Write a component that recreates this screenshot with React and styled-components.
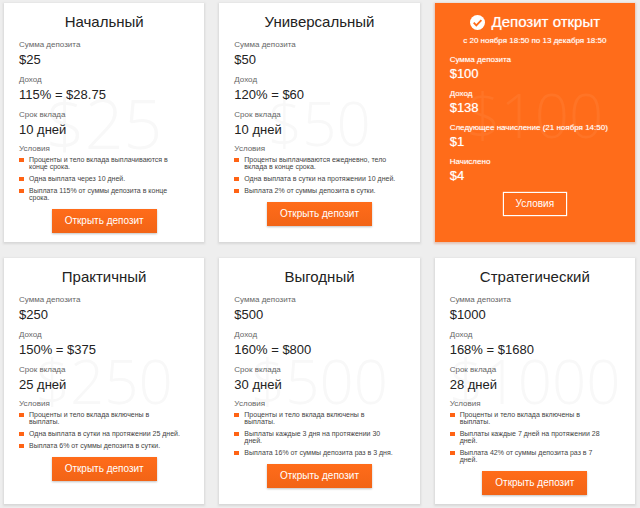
import React from "react";
import styled, { createGlobalStyle } from "styled-components";

const GlobalStyle = createGlobalStyle`
    body {
        margin: 0;
        background-color: #eeeeee;
        font-family: "Liberation Sans", Arial, sans-serif;
    }
`

const Grid = styled.main`
    display: grid;
    grid-template-columns: repeat(3, 1fr);
    gap: 16px 15px;
    padding: 3px 5px 4px 4px;
`

const Card = styled.section`
    position: relative;
    display: flex;
    flex-direction: column;
    box-sizing: border-box;
    padding: 9px 15px;
    color: ${({ $active }) => ($active ? "#ffffff" : "#222222")};
    background-color: ${({ $active }) => ($active ? "#ff6c1a" : "#ffffff")};
    box-shadow: 0 1px 2px 1px ${({ $active }) => ($active ? "#e3c4b6" : "#d8d8d8")};
    text-shadow: ${({ $active }) => ($active ? "0 0 1px #ffffff99" : "none")};
`

const Watermark = styled.div`
    position: absolute;
    inset: 0;
    display: flex;
    align-items: center;
    justify-content: center;
    padding-bottom: ${({ $active }) => ($active ? "16px" : "0")};
    font-family: "Open Sans", sans-serif;
    font-weight: 300;
    font-size: ${({ $large }) => ($large ? "68px" : "60px")};
    line-height: 1;
    color: ${({ $active }) => ($active ? "#ff7426" : "#f8f8f8")};
    text-shadow: none;
    pointer-events: none;
`

const Content = styled.div`
    position: relative;
    display: flex;
    flex-direction: column;
`

const Title = styled.h2`
    display: flex;
    align-items: center;
    justify-content: center;
    gap: 7px;
    margin: 0;
    font-size: 15px;
    font-weight: 400;
    line-height: 20px;
    white-space: nowrap;
`

const Period = styled.p`
    margin: 3px 0 0;
    font-size: 8px;
    line-height: 12px;
    text-align: center;
`

const Facts = styled.dl`
    margin: 7px 0 0;
`

const Label = styled.dt`
    font-size: 8px;
    line-height: 12px;
    color: ${({ $active }) => ($active ? "#ffffff" : "#666666")};
`

const Value = styled.dd`
    margin: 0 0 6px;
    font-size: 13px;
    line-height: ${({ $active }) => ($active ? "16px" : "17px")};
`

const Subtitle = styled.h3`
    margin: 0;
    font-size: 8px;
    font-weight: 400;
    line-height: 10px;
    color: #666666;
`

const Terms = styled.ul`
    display: flex;
    flex-direction: column;
    gap: 5px;
    margin: 2px 0 8px;
    padding: 0;
    list-style: none;
`

const Term = styled.li`
    display: flex;
    gap: 5px;
    font-size: 7px;
    line-height: 7px;
    white-space: pre-line;
    color: #444444;
    &::before {
        content: "";
        flex: none;
        width: 5px;
        height: 4px;
        margin-top: 2px;
        background-color: #ff6314;
    }
`

const Button = styled.button`
    align-self: center;
    box-sizing: border-box;
    height: 24px;
    padding: 0 13px;
    border: none;
    font-family: inherit;
    font-size: 10px;
    line-height: 22px;
    color: #ffffff;
    background: linear-gradient(#ff6c1a, #f26416);
    box-shadow: 0 1px 2px #00000040;
    cursor: pointer;
`

const OutlineButton = styled(Button)`
    margin-top: 2px;
    padding: 0 12px;
    border: 1px solid #ffffff;
    background: none;
    box-shadow: 0 0 1px #ffffff;
`

const CheckIcon = () => (
    <svg width="15" height="15" viewBox="0 0 15 15" aria-hidden="true">
        <circle cx="7.5" cy="7.5" r="7.5" fill="#ffffff" />
        <path d="M3.7 7.7 6.3 10.3 11.4 5.2" fill="none" stroke="#ff6c1a" strokeWidth="1.9" />
    </svg>
)

const rows = (amount, income, term) => [
    ["Сумма депозита", amount],
    ["Доход", income],
    ["Срок вклада", term],
]

const starter = {
    name: "Начальный",
    amount: "$25",
    large: true,
    facts: rows("$25", "115% = $28.75", "10 дней"),
    terms: [
        "Проценты и тело вклада выплачиваются в\nконце срока.",
        "Одна выплата через 10 дней.",
        "Выплата 115% от суммы депозита в конце\nсрока.",
    ],
}

const universal = {
    name: "Универсальный",
    amount: "$50",
    facts: rows("$50", "120% = $60", "10 дней"),
    terms: [
        "Проценты выплачиваются ежедневно, тело\nвклада в конце срока.",
        "Одна выплата в сутки на протяжении 10 дней.",
        "Выплата 2% от суммы депозита в сутки.",
    ],
}

const practical = {
    name: "Практичный",
    amount: "$250",
    facts: rows("$250", "150% = $375", "25 дней"),
    terms: [
        "Проценты и тело вклада включены в\nвыплаты.",
        "Одна выплата в сутки на протяжении 25 дней.",
        "Выплата 6% от суммы депозита в сутки.",
    ],
}

const profitable = {
    name: "Выгодный",
    amount: "$500",
    facts: rows("$500", "160% = $800", "30 дней"),
    terms: [
        "Проценты и тело вклада включены в\nвыплаты.",
        "Выплаты каждые 3 дня на протяжении 30\nдней.",
        "Выплата 16% от суммы депозита раз в 3 дня.",
    ],
}

const strategic = {
    name: "Стратегический",
    amount: "$1000",
    facts: rows("$1000", "168% = $1680", "28 дней"),
    terms: [
        "Проценты и тело вклада включены в\nвыплаты.",
        "Выплаты каждые 7 дней на протяжении 28\nдней.",
        "Выплата 42% от суммы депозита раз в 7\nдней.",
    ],
}

const openFacts = [
    ["Сумма депозита", "$100"],
    ["Доход", "$138"],
    ["Следующее начисление (21 ноября 14:50)", "$1"],
    ["Начислено", "$4"],
]

const FactList = ({ facts, active }) => (
    <Facts>
        {facts.map(([label, value]) => (
            <React.Fragment key={label}>
                <Label $active={active}>{label}</Label>
                <Value $active={active}>{value}</Value>
            </React.Fragment>
        ))}
    </Facts>
)

const PlanCard = ({ plan }) => (
    <Card>
        <Watermark $large={plan.large} aria-hidden="true">{plan.amount}</Watermark>
        <Content>
            <Title>{plan.name}</Title>
            <FactList facts={plan.facts} />
            <Subtitle>Условия</Subtitle>
            <Terms>
                {plan.terms.map((term) => (
                    <Term key={term}>{term}</Term>
                ))}
            </Terms>
            <Button type="button">Открыть депозит</Button>
        </Content>
    </Card>
)

const OpenDepositCard = () => (
    <Card $active>
        <Watermark $active aria-hidden="true">$100</Watermark>
        <Content>
            <Title><CheckIcon />Депозит открыт</Title>
            <Period>с 20 ноября 18:50 по 13 декабря 18:50</Period>
            <FactList facts={openFacts} active />
            <OutlineButton type="button">Условия</OutlineButton>
        </Content>
    </Card>
)

const App = () => {
    return (
        <>
            <GlobalStyle />
            <Grid>
                <PlanCard plan={starter} />
                <PlanCard plan={universal} />
                <OpenDepositCard />
                <PlanCard plan={practical} />
                <PlanCard plan={profitable} />
                <PlanCard plan={strategic} />
            </Grid>
        </>
    );
}

export default App;
